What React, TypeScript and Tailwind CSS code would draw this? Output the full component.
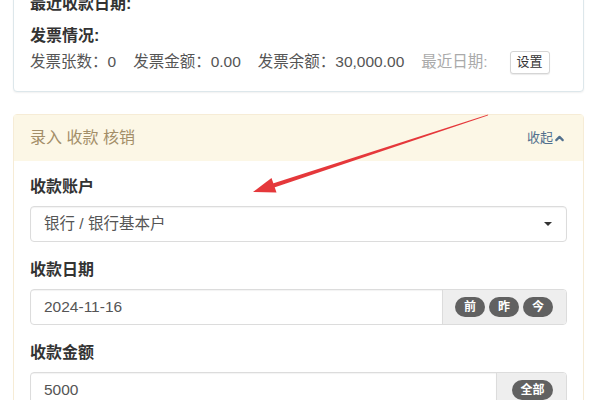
import { ChevronUp } from "lucide-react"

const FONT = { fontFamily: '"Liberation Sans", "Noto Sans CJK SC", sans-serif' }

function Pill({ children, wide }: { children: React.ReactNode; wide?: boolean }) {
  return (
    <span
      className={`flex h-[20px] items-center justify-center rounded-full bg-[#616161] text-[12px] font-bold leading-none text-white ${
        wide ? "w-[41px]" : "w-[30px]"
      }`}
    >
      {children}
    </span>
  )
}

function Field({ label, children }: { label: string; children: React.ReactNode }) {
  return (
    <div className="mb-[18px]">
      <div className="mb-[9px] h-5 text-[16px] font-bold leading-5 text-[#333]">{label}</div>
      {children}
    </div>
  )
}

export default function App() {
  return (
    <div className="relative h-[400px] overflow-hidden bg-white pl-[13px] pr-[16px]" style={FONT}>
      {/* invoice summary card */}
      <div className="-mt-[19px] rounded-[4px] border border-[#dde7eb] bg-white px-4 pb-[17px] pt-[12px] shadow-[0_1px_2px_rgba(0,0,0,0.06)]">
        <div className="h-5 text-[16px] font-bold leading-5 text-[#333]">最近收款日期:</div>
        <div className="mt-[12px] h-5 text-[16px] font-bold leading-5 text-[#333]">发票情况:</div>
        <div className="mt-1 flex h-6 items-center text-[15.5px] text-[#555]">
          <span>发票张数：0</span>
          <span className="ml-[17px]">发票金额：0.00</span>
          <span className="ml-[17px]">发票余额：30,000.00</span>
          <span className="ml-[17px] text-[#aaa]">最近日期:</span>
          <button className="ml-[22px] flex h-[23px] items-center rounded-[3px] border border-[#d5d5d5] bg-white px-[6px] text-[13px] text-[#333] shadow-[0_1px_1px_rgba(0,0,0,0.08)]">
            设置
          </button>
        </div>
      </div>

      {/* entry panel */}
      <div className="mt-[22px] rounded-[4px] border border-[#f6ecd6] bg-white">
        <div className="flex h-[46px] items-center justify-between bg-[#fcf7e6] pl-4 pr-[17px]">
          <span className="text-[16px] text-[#a38e68]">录入 收款 核销</span>
          <span className="flex items-center text-[13px] text-[#52708e]">
            收起
            <ChevronUp size={13} strokeWidth={4} />
          </span>
        </div>
        <div className="px-4 pt-[16px]">
          <Field label="收款账户">
            <div className="flex h-[36px] items-center justify-between rounded-[4px] border border-[#dcdcdc] pl-[13px] pr-[14px] text-[15.5px] text-[#555] shadow-[inset_0_1px_1px_rgba(0,0,0,0.05)]">
              <span>银行 / 银行基本户</span>
              <span className="h-0 w-0 border-x-[4px] border-t-[4px] border-x-transparent border-t-[#333]" />
            </div>
          </Field>
          <Field label="收款日期">
            <div className="flex h-[36px] overflow-hidden rounded-[4px] border border-[#dcdcdc]">
              <div className="flex flex-1 items-center pl-[13px] text-[15.5px] text-[#555] shadow-[inset_0_1px_1px_rgba(0,0,0,0.05)]">
                2024-11-16
              </div>
              <div className="flex w-[124px] items-center justify-end gap-[4px] border-l border-[#dcdcdc] bg-[#eeeeee] pr-[13px]">
                <Pill>前</Pill>
                <Pill>昨</Pill>
                <Pill>今</Pill>
              </div>
            </div>
          </Field>
          <Field label="收款金额">
            <div className="flex h-[36px] overflow-hidden rounded-[4px] border border-[#dcdcdc]">
              <div className="flex flex-1 items-center pl-[13px] text-[15.5px] text-[#555] shadow-[inset_0_1px_1px_rgba(0,0,0,0.05)]">
                5000
              </div>
              <div className="flex w-[70px] items-center justify-end border-l border-[#dcdcdc] bg-[#eeeeee] pr-[13px]">
                <Pill wide>全部</Pill>
              </div>
            </div>
          </Field>
        </div>
      </div>

      {/* annotation arrow */}
      <svg className="pointer-events-none absolute left-0 top-0" width="600" height="400" viewBox="0 0 600 400">
        <polygon points="488.2,114.6 487.8,115.4 271.2,188.4 272.8,183.6" fill="#e5383b" />
        <polygon points="253,192 276.5,192.5 271.5,178" fill="#e5383b" />
      </svg>
    </div>
  )
}
